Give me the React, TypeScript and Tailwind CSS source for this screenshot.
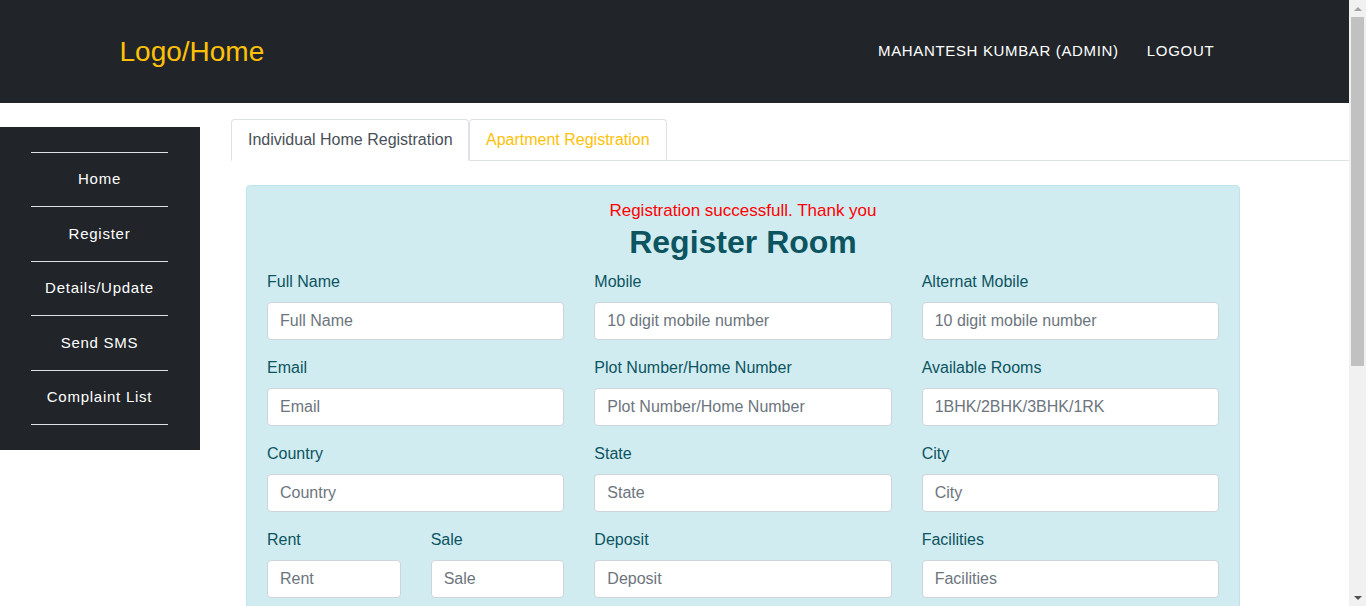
import React from "react";

const fields: { label: string; ph: string }[][] = [
  [
    { label: "Full Name", ph: "Full Name" },
    { label: "Mobile", ph: "10 digit mobile number" },
    { label: "Alternat Mobile", ph: "10 digit mobile number" },
  ],
  [
    { label: "Email", ph: "Email" },
    { label: "Plot Number/Home Number", ph: "Plot Number/Home Number" },
    { label: "Available Rooms", ph: "1BHK/2BHK/3BHK/1RK" },
  ],
  [
    { label: "Country", ph: "Country" },
    { label: "State", ph: "State" },
    { label: "City", ph: "City" },
  ],
];

function Field({ label, ph }: { label: string; ph: string }) {
  return (
    <div className="mb-4">
      <label className="block mb-2 leading-6">{label}</label>
      <input
        type="text"
        placeholder={ph}
        className="block w-full h-[38px] px-3 py-[6px] text-base leading-6 bg-white border border-[#ced4da] rounded-[4px] text-[#495057] placeholder:text-[#6c757d] outline-none"
      />
    </div>
  );
}

function ScrollBar() {
  return (
    <div className="w-[17px] shrink-0 h-full bg-[#f1f1f1] flex flex-col items-center">
      <div className="h-[17px] w-full flex items-center justify-center">
        <div className="w-0 h-0 border-x-[4px] border-x-transparent border-b-[4px] border-b-[#a3a3a3]" />
      </div>
      <div className="w-[13px] h-[349px] bg-[#c1c1c1]" />
      <div className="flex-1" />
      <div className="h-[17px] w-full flex items-center justify-center">
        <div className="w-0 h-0 border-x-[4px] border-x-transparent border-t-[4px] border-t-[#505050]" />
      </div>
    </div>
  );
}

export default function App() {
  const side = ["Home", "Register", "Details/Update", "Send SMS", "Complaint List"];
  return (
    <div
      className="h-[606px] overflow-hidden flex bg-white text-base text-[#212529]"
      style={{ fontFamily: '"Liberation Sans", Arial, sans-serif' }}
    >
      <div className="flex-1 min-w-0 h-full overflow-hidden">
        <header className="bg-[#212529] h-[103px]">
          <div className="w-[1140px] mx-auto px-[15px] h-full flex items-center justify-between">
            <a className="text-[#ffc107] text-[28px] leading-none">Logo/Home</a>
            <nav className="flex items-center">
              <a className="text-white text-[15px] tracking-[0.65px] uppercase px-[14px]">Mahantesh Kumbar (Admin)</a>
              <a className="text-white text-[15px] tracking-[0.75px] uppercase pl-[14px] pr-[15px]">Logout</a>
            </nav>
          </div>
        </header>

        <div className="flex items-start">
          <aside className="w-[200px] shrink-0 bg-[#212529] mt-[24px] pt-[25px] pb-[25px]">
            <ul className="w-[137px] ml-[31px] border-b border-[#dee2e6]">
              {side.map((s) => (
                <li
                  key={s}
                  className="border-t border-[#dee2e6] h-[54.4px] flex items-center justify-center text-white text-[15px] tracking-wider"
                >
                  {s}
                </li>
              ))}
            </ul>
          </aside>

          <main className="flex-1 ml-[31px] mt-[16px]">
            <div className="flex border-b border-[#dee2e6]">
              <div className="w-[238px] whitespace-nowrap px-4 py-2 leading-6 border border-[#dee2e6] border-b-white bg-white rounded-t-[4px] -mb-px text-[#495057]">
                Individual Home Registration
              </div>
              <div className="w-[198px] whitespace-nowrap px-4 py-2 leading-6 border border-[#dee2e6] border-b-0 rounded-t-[4px] text-[#ffc107]">
                Apartment Registration
              </div>
            </div>

            <div className="w-[994px] ml-[15px] mt-[24px] bg-[#d1ecf1] border border-[#bee5eb] rounded-[4px] px-5 pt-[13px] pb-10 text-[#0c5460]">
              <p className="text-center text-[#ff0000] text-[17px] leading-6">Registration successfull. Thank you</p>
              <h2 className="text-center text-[32px] font-bold leading-[1.2] mb-[9px]">Register Room</h2>
              {fields.map((row, i) => (
                <div key={i} className="grid grid-cols-3 gap-x-[30px]">
                  {row.map((f) => (
                    <Field key={f.label} label={f.label} ph={f.ph} />
                  ))}
                </div>
              ))}
              <div className="grid grid-cols-3 gap-x-[30px]">
                <div className="grid grid-cols-2 gap-x-[30px]">
                  <Field label="Rent" ph="Rent" />
                  <Field label="Sale" ph="Sale" />
                </div>
                <Field label="Deposit" ph="Deposit" />
                <Field label="Facilities" ph="Facilities" />
              </div>
            </div>
          </main>
        </div>
      </div>
      <ScrollBar />
    </div>
  );
}
